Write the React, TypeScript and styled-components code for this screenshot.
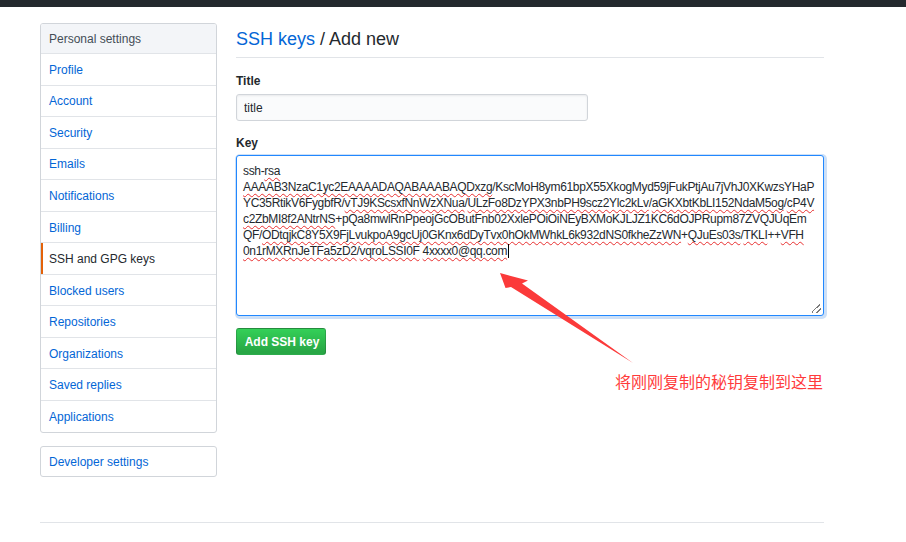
import React from "react";
import styled, { createGlobalStyle } from "styled-components";

const GlobalStyle = createGlobalStyle`
  html, body { margin: 0; padding: 0; background: #fff; }
  body {
    font-family: "Liberation Sans", Arial, sans-serif;
    font-size: 12px;
    color: #24292e;
  }
  * { box-sizing: border-box; }
`;

const Page = styled.div`
  position: relative;
  width: 906px;
  height: 542px;
  overflow: hidden;
  background: #fff;
`;

const TopBar = styled.div`
  height: 7px;
  background: #24292e;
`;

const Container = styled.div`
  width: 784px;
  margin: 16px 0 0 40px;
`;

const Layout = styled.div`
  display: flex;
  align-items: flex-start;
  gap: 19px;
`;

const Sidebar = styled.nav`
  width: 177px;
  flex: none;
  display: flex;
  flex-direction: column;
  gap: 13px;
`;

const Menu = styled.div`
  border: 1px solid #d1d5da;
  border-radius: 3px;
  background: #fff;
  overflow: hidden;
`;

const MenuHeading = styled.div`
  height: 29px;
  display: flex;
  align-items: center;
  padding-left: 8px;
  background: #f3f5f8;
  color: #444d56;
  font-size: 12px;
`;

const MenuItem = styled.a<{ $selected?: boolean; $first?: boolean }>`
  display: flex;
  align-items: center;
  height: ${(p) => (p.$first ? "29.5px" : "31.55px")};
  padding: 1px 0 0 8px;
  border-top: ${(p) => (p.$first ? "none" : "1px solid #e1e4e8")};
  color: ${(p) => (p.$selected ? "#24292e" : "#0366d6")};
  text-decoration: none;
  font-size: 12px;
  box-shadow: ${(p) => (p.$selected ? "inset 2px 0 0 #e36209" : "none")};
  cursor: pointer;
`;

const Main = styled.main`
  flex: 1;
  min-width: 0;
`;

const Subhead = styled.div`
  padding: 4px 0 6px;
  border-bottom: 1px solid #e1e4e8;
`;

const SubheadTitle = styled.h2`
  margin: 0;
  font-size: 18px;
  line-height: 24px;
  font-weight: normal;
  color: #24292e;
`;

const Crumb = styled.a`
  color: #0366d6;
  text-decoration: none;
`;

const Form = styled.form`
  display: flex;
  flex-direction: column;
  align-items: flex-start;
  padding-top: 15px;
`;

const FormGroup = styled.div<{ $gap: number }>`
  display: flex;
  flex-direction: column;
  align-items: stretch;
  align-self: stretch;
  margin-bottom: ${(p) => p.$gap}px;
`;

const Label = styled.label<{ $below: number }>`
  display: block;
  font-weight: bold;
  font-size: 12px;
  line-height: 16px;
  margin-bottom: ${(p) => p.$below}px;
  color: #24292e;
`;

const Input = styled.input`
  width: 352px;
  height: 27px;
  padding: 0 7px;
  font-family: "Liberation Sans", Arial, sans-serif;
  font-size: 12px;
  color: #24292e;
  background: #fafbfc;
  border: 1px solid #d1d5da;
  border-radius: 3px;
  box-shadow: inset 0 1px 2px rgba(27, 31, 35, 0.075);
  outline: none;
`;

const KeyField = styled.div`
  position: relative;
  height: 161px;
  padding: 7px 6px;
  font-size: 12px;
  line-height: 16px;
  letter-spacing: -0.34px;
  color: #24292e;
  background: #fff;
  border: 1px solid #2188ff;
  border-radius: 3px;
  box-shadow: 1px 1px 0 2px rgba(3, 102, 214, 0.2);
  overflow: hidden;

  &::after {
    content: "";
    position: absolute;
    right: 2px;
    bottom: 2px;
    width: 9px;
    height: 9px;
    background: linear-gradient(
      135deg,
      transparent 42%,
      #7a7a7a 42%,
      #7a7a7a 50%,
      transparent 50%,
      transparent 70%,
      #7a7a7a 70%,
      #7a7a7a 78%,
      transparent 78%
    );
  }
`;

const KeyLine = styled.div`
  white-space: nowrap;
`;

const Misspelled = styled.span`
  text-decoration: underline wavy #e83030;
  text-decoration-thickness: 1px;
  text-underline-offset: 2px;
`;

const Caret = styled.span`
  display: inline-block;
  width: 1px;
  height: 14px;
  margin-left: 1px;
  vertical-align: -3px;
  background: #000;
`;

const Button = styled.button`
  width: 90px;
  height: 27px;
  margin-top: 12px;
  padding: 0 0 0 2px;
  font-family: "Liberation Sans", Arial, sans-serif;
  font-size: 12px;
  font-weight: bold;
  color: #fff;
  background: linear-gradient(-180deg, #34d058 0%, #28a745 90%);
  border: 1px solid rgba(27, 31, 35, 0.2);
  border-radius: 3px;
  cursor: pointer;
`;

const Footer = styled.footer`
  margin-top: 45px;
  border-top: 1px solid #e1e4e8;
`;

const Overlay = styled.div`
  position: absolute;
  inset: 0;
  pointer-events: none;
`;

const ArrowSvg = styled.svg`
  position: absolute;
  left: 0;
  top: 0;
`;

const Note = styled.div`
  position: absolute;
  left: 615px;
  top: 371px;
  font-family: "Noto Sans CJK SC", sans-serif;
  font-size: 16px;
  line-height: 20px;
  color: #ff3b3b;
  white-space: nowrap;
`;

type Seg = [string, boolean];

const keyLines: Seg[][] = [
  [["ssh-", false], ["rsa", true]],
  [
    ["AAAAB3NzaC1yc2EAAAADAQABAAABAQDxzg", true],
    ["/KscMoH8ym61bpX55XkogMyd59jFukPtjAu7jVhJ0XKwzsYHaP", false],
  ],
  [
    ["YC35RtikV6FygbfR/", false],
    ["vTJ9KScsxfNnWzXNua", true],
    ["/", false],
    ["ULzFo8DzYPX3nbPH9scz2Ylc2kLv", true],
    ["/", false],
    ["aGKXbtKbLI152NdaM5og", true],
    ["/", false],
    ["cP4V", true],
  ],
  [
    ["c2ZbMI8f2ANtrNS", true],
    ["+pQa8mwlRnPpeojGcOButFnb02XxlePOiOiNEyBXMoKJLJZ1KC6dOJPRupm87ZVQJUqEm", false],
  ],
  [
    ["QF/", false],
    ["ODtqjkC8Y5X9FjLvukpoA9gcUj0GKnx6dDyTvx0hOkMWhkL6k932dNS0fkheZzWN", true],
    ["+", false],
    ["QJuEs03s", true],
    ["/", false],
    ["TKLI", true],
    ["++", false],
    ["VFH", true],
  ],
  [
    ["0n1rMXRnJeTFa5zD2", true],
    ["/", false],
    ["vqroLSSI0F", true],
    [" ", false],
    ["4xxxx0@qq.com", true],
  ],
];

const menuItems = [
  "Profile",
  "Account",
  "Security",
  "Emails",
  "Notifications",
  "Billing",
  "SSH and GPG keys",
  "Blocked users",
  "Repositories",
  "Organizations",
  "Saved replies",
  "Applications",
];

export default function App() {
  return (
    <>
      <GlobalStyle />
      <Page>
        <TopBar />
        <Container>
          <Layout>
            <Sidebar>
              <Menu>
                <MenuHeading>Personal settings</MenuHeading>
                {menuItems.map((item) => (
                  <MenuItem key={item} $selected={item === "SSH and GPG keys"}>
                    {item}
                  </MenuItem>
                ))}
              </Menu>
              <Menu>
                <MenuItem $first>Developer settings</MenuItem>
              </Menu>
            </Sidebar>
            <Main>
              <Subhead>
                <SubheadTitle>
                  <Crumb>SSH keys</Crumb> / Add new
                </SubheadTitle>
              </Subhead>
              <Form onSubmit={(e) => e.preventDefault()}>
                <FormGroup $gap={14}>
                  <Label $below={5}>Title</Label>
                  <Input defaultValue="title" />
                </FormGroup>
                <FormGroup $gap={0}>
                  <Label $below={4}>Key</Label>
                  <KeyField role="textbox" aria-multiline="true">
                    {keyLines.map((line, i) => (
                      <KeyLine key={i}>
                        {line.map(([text, bad], j) =>
                          bad ? (
                            <Misspelled key={j}>{text}</Misspelled>
                          ) : (
                            <span key={j}>{text}</span>
                          )
                        )}
                        {i === keyLines.length - 1 && <Caret />}
                      </KeyLine>
                    ))}
                  </KeyField>
                </FormGroup>
                <Button type="submit">Add SSH key</Button>
              </Form>
            </Main>
          </Layout>
          <Footer />
        </Container>
        <Overlay>
          <ArrowSvg width="906" height="542" viewBox="0 0 906 542">
            <polygon
              points="500,273 528,280.5 522,283.5 633,363 511,287 505.5,288"
              fill="#fb3a3a"
            />
          </ArrowSvg>
          <Note>将刚刚复制的秘钥复制到这里</Note>
        </Overlay>
      </Page>
    </>
  );
}
